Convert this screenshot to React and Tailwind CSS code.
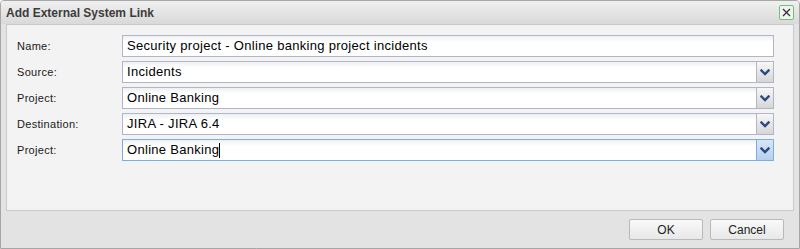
import React from "react";

function Chevron() {
  return (
    <svg width="10" height="7" viewBox="0 0 10 7">
      <polyline points="1.5,1.5 5,5 8.5,1.5" fill="none" stroke="#2b4a86" strokeWidth="2.4" strokeLinecap="square" />
    </svg>
  );
}

function Field({ value, select, focused, cursor }) {
  return (
    <div
      className={`flex h-[22px] flex-1 border ${focused ? "border-[#7aaee3]" : "border-[#b2b5c9]"} bg-gradient-to-b from-[#eef0f0] via-white via-[30%] to-white`}
    >
      <div className="flex flex-1 items-center pl-[4px] text-[13px] tracking-[0.3px] text-black [font-family:'Liberation_Sans',Arial,sans-serif]">
        <span>{value}</span>
        {cursor && <span className="inline-block h-[15px] w-[1px] bg-black" />}
      </div>
      {select && (
        <div
          className={`flex w-[17px] items-center justify-center border-l ${
            focused
              ? "border-[#7aaee3] bg-gradient-to-b from-[#d8e6f6] to-[#b7d0ee]"
              : "border-[#b2b5c9] bg-gradient-to-b from-[#f7f7f7] to-[#d6d6d6]"
          }`}
        >
          <Chevron />
        </div>
      )}
    </div>
  );
}

function Row({ label, ...rest }) {
  return (
    <div className="flex items-center">
      <div className="w-[105px] text-[11px] tracking-[0.3px] text-[#1a1a1a] [font-family:'Liberation_Sans',Arial,sans-serif]">{label}</div>
      <Field {...rest} />
    </div>
  );
}

export default function App() {
  return (
    <div className="flex h-[249px] w-[800px] flex-col overflow-hidden rounded-t-[4px] border border-[#a6a6a6] bg-[#e3e3e3] [font-family:'Liberation_Sans',Arial,sans-serif]">
      <div className="flex h-[23px] items-center justify-between bg-gradient-to-b from-[#f0f0f0] to-[#d9d9d9] pl-[5px] pr-[5px]">
        <span className="text-[12px] font-bold text-[#3c3c3c]">Add External System Link</span>
        <div className="flex h-[15px] w-[15px] items-center justify-center rounded-[2px] border border-[#6dc46d] bg-[#f2f2f2]">
          <svg width="9" height="9" viewBox="0 0 9 9">
            <path d="M1 1 L8 8 M8 1 L1 8" stroke="#333" strokeWidth="1.3" />
          </svg>
        </div>
      </div>
      <div className="mx-[5px] flex h-[187px] flex-col gap-[4px] border border-[#c9c9c9] bg-[#f3f3f3] pl-[10px] pr-[19px] pt-[10px]">
        <Row label="Name:" value="Security project - Online banking project incidents" />
        <Row label="Source:" value="Incidents" select />
        <Row label="Project:" value="Online Banking" select />
        <Row label="Destination:" value="JIRA - JIRA 6.4" select />
        <Row label="Project:" value="Online Banking" select focused cursor />
      </div>
      <div className="flex flex-1 items-start justify-end gap-[7px] pr-[15px] pt-[8px]">
        <button className="h-[21px] w-[74px] rounded-[2px] border border-[#b9b9b9] bg-gradient-to-b from-[#f9f9f9] to-[#e8e8e8] text-[12px] text-[#222]">
          OK
        </button>
        <button className="h-[21px] w-[74px] rounded-[2px] border border-[#b9b9b9] bg-gradient-to-b from-[#f9f9f9] to-[#e8e8e8] text-[12px] text-[#222]">
          Cancel
        </button>
      </div>
    </div>
  );
}
